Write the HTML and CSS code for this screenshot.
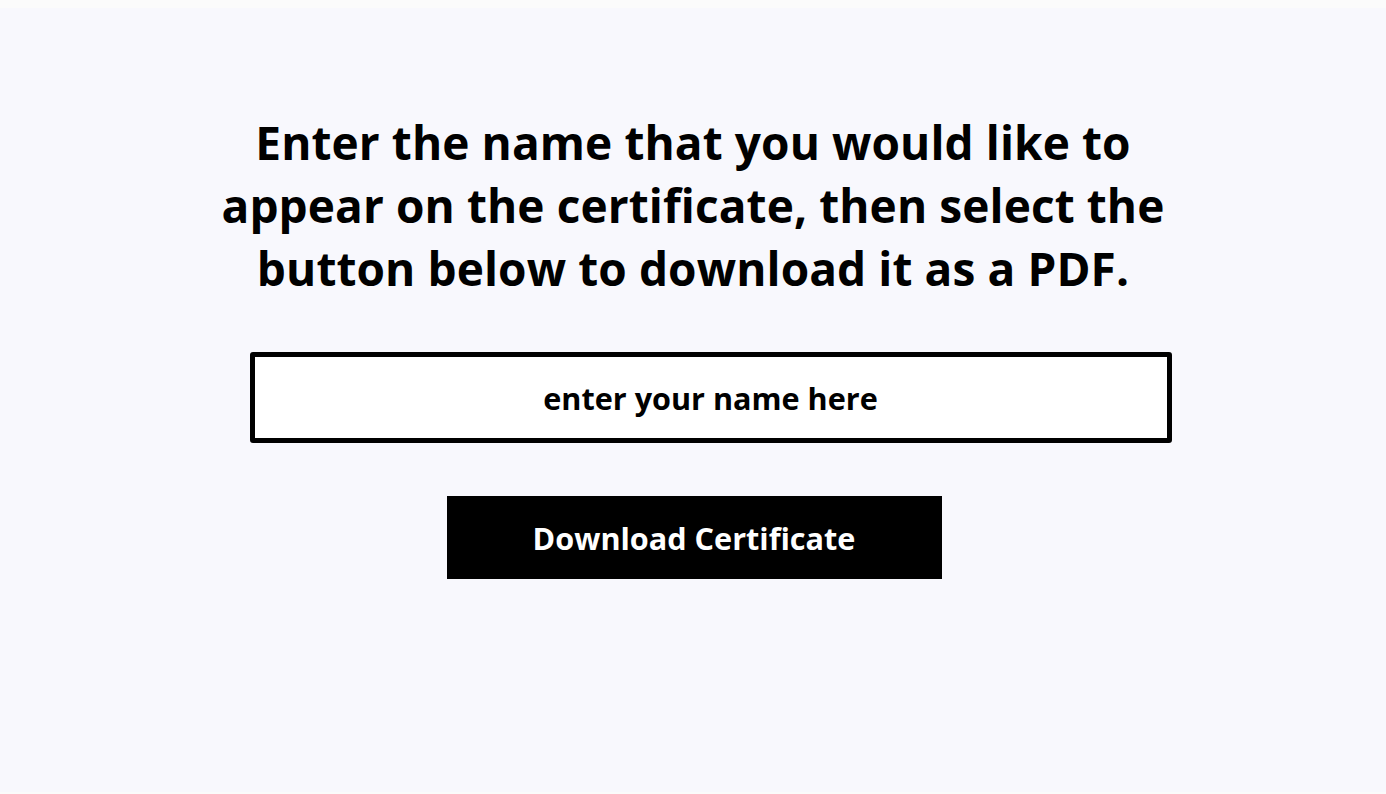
FILE: index.html
```html
<!DOCTYPE html>
<html lang="en">
<head>
<meta charset="utf-8">
<title>Download Certificate</title>
<link rel="stylesheet" href="styles.css">
</head>
<body>
<main class="page">
  <h1 class="title">Enter the name that you would like to appear on the certificate, then select the button below to download it as a PDF.</h1>
  <input class="name-input" type="text" placeholder="enter your name here">
  <button class="download-btn" type="button">Download Certificate</button>
</main>
</body>
</html>
```
FILE: styles.css
```css
html {
  background: #fbfbfb;
}
body {
  margin: 8px 0 0;
  font-family: "Open Sans", "Liberation Sans", sans-serif;
}
.page {
  background: #f8f8fd;
  height: 784px;
  display: flex;
  flex-direction: column;
  align-items: center;
  padding-top: 103px;
  box-sizing: border-box;
}
.title {
  margin: 0;
  max-width: 950px;
  font-size: 46px;
  line-height: 63px;
  letter-spacing: 0.1px;
  font-weight: 700;
  text-align: center;
  color: #000;
}
.name-input {
  margin: 52px 0 0 35px;
  width: 922px;
  height: 91px;
  box-sizing: border-box;
  border: 5px solid #000;
  border-radius: 3px;
  background: #fff;
  font-family: inherit;
  font-size: 30.6px;
  font-weight: 700;
  text-align: center;
  color: #000;
  outline: none;
}
.name-input::placeholder {
  color: #000;
  opacity: 1;
}
.download-btn {
  margin: 53px 0 0 2px;
  width: 495px;
  height: 83px;
  border: none;
  background: #000;
  color: #fff;
  font-family: inherit;
  font-size: 30.6px;
  font-weight: 700;
  cursor: pointer;
}
```
